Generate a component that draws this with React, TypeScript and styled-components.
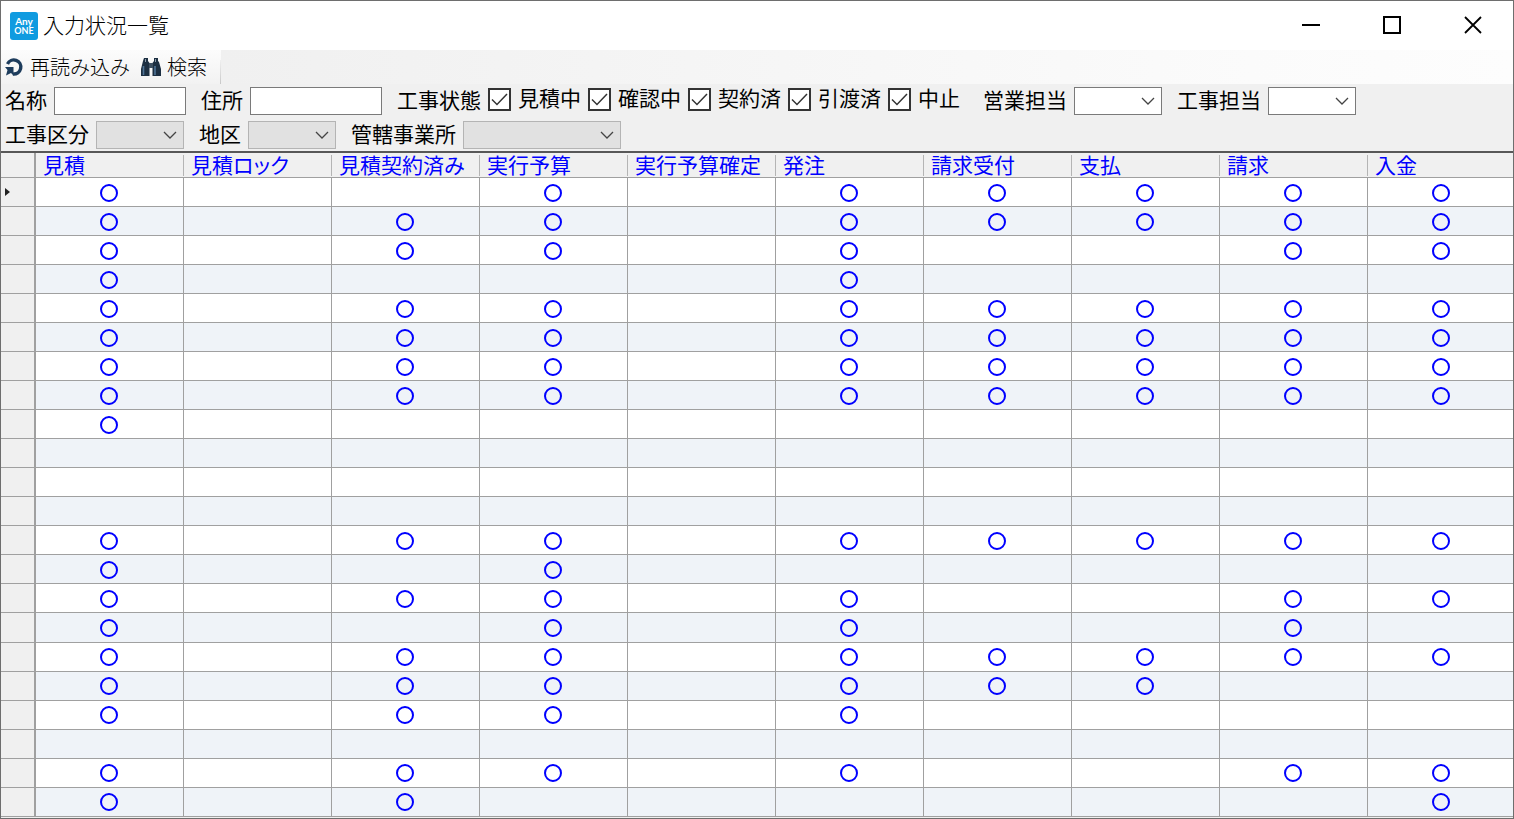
import React from "react";
import styled, { createGlobalStyle } from "styled-components";

const GlobalStyle = createGlobalStyle`
  *, *::before, *::after { box-sizing: border-box; }
  body {
    margin: 0;
    overflow: hidden;
    font-family: "Noto Sans CJK JP", "Noto Sans", sans-serif;
    color: #000;
  }
  button, input, select { font: inherit; color: inherit; }
`;

const Window = styled.main`
  display: flex;
  flex-direction: column;
  height: 100vh;
  border: 1px solid #6e6e6e;
  background: #f0f0f0;
  overflow: hidden;
`;

const TitleBar = styled.header`
  display: flex;
  align-items: center;
  flex: none;
  height: 49px;
  padding-left: 9px;
  background: #fff;
`;

const Title = styled.h1`
  flex: 1;
  margin: 0;
  padding: 0 0 3px 5px;
  font-size: 21px;
  line-height: 28px;
  font-weight: 300;
`;

const WindowButton = styled.button`
  display: flex;
  align-items: center;
  justify-content: center;
  width: 81px;
  height: 100%;
  padding: 0 0 2px;
  border: 0;
  background: transparent;
`;

const ToolBar = styled.div`
  display: flex;
  flex: none;
  height: 34px;
  background: linear-gradient(to right, #f0f0f0 220px, #fbfbfb 1250px, #fdfdfd);
`;

const ToolGroup = styled.div`
  display: flex;
  align-items: center;
  gap: 10px;
  width: 220px;
  padding-left: 4px;
  background:
    linear-gradient(#f0f0f0, #c8c8c8) right bottom / 1px 24px no-repeat,
    linear-gradient(#fcfcfc, #f2f2f2);
`;

const ToolButton = styled.button`
  display: flex;
  align-items: center;
  gap: 5px;
  padding: 0;
  border: 0;
  background: transparent;
  font-size: 20px;
  line-height: 28px;
  font-weight: 300;
  white-space: nowrap;
`;

const Filters = styled.form`
  display: flex;
  flex-direction: column;
  flex: none;
  gap: 6px;
  padding: 3px 0 2px 4px;
`;

const FilterRow = styled.div`
  display: flex;
  align-items: center;
  gap: 15px;
  height: 28px;
`;

const Field = styled.label`
  display: flex;
  align-items: center;
  gap: 7px;
`;

const Caption = styled.span`
  padding-bottom: 3px;
  font-size: 21px;
  line-height: 25px;
  white-space: nowrap;
`;

const TextBox = styled.input`
  width: 132px;
  height: 28px;
  padding: 0 4px;
  border: 1px solid #7a7a7a;
  background: #fff;
  outline: none;
`;

const SelectWrap = styled.span<{ $width: number }>`
  position: relative;
  display: flex;
  width: ${(p) => p.$width}px;

  svg {
    position: absolute;
    right: 7px;
    top: 10px;
    pointer-events: none;
  }
`;

const SelectBox = styled.select`
  appearance: none;
  width: 100%;
  height: 28px;
  padding: 0 24px 0 4px;
  border: 1px solid #7a7a7a;
  border-radius: 0;
  background: #fff;
  opacity: 1;

  &:disabled {
    border-color: #b4b4b4;
    background: #e1e1e1;
  }
`;

const States = styled.fieldset`
  display: flex;
  align-items: center;
  gap: 7px;
  margin: 0 8px 0 0;
  padding: 0;
  border: 0;
`;

const StateLabel = styled.label`
  display: flex;
  align-items: center;
  gap: 7px;
  height: 28px;
  padding-bottom: 4px;
`;

const CheckBox = styled.input`
  appearance: none;
  width: 23px;
  height: 23px;
  margin: 0;
  border: 2px solid #333;
  background: #fff;

  &:checked {
    background-image: url("data:image/svg+xml,%3Csvg xmlns='http://www.w3.org/2000/svg' viewBox='0 0 19 19'%3E%3Cpath d='M2 9.5l5 5L17 4' fill='none' stroke='%23333' stroke-width='1.5'/%3E%3C/svg%3E");
  }
`;

const GridPane = styled.section`
  flex: 1;
  min-height: 0;
  padding-bottom: 1px;
  border-top: 2px solid #585858;
`;

const Grid = styled.table`
  width: 100%;
  height: 100%;
  border-collapse: separate;
  border-spacing: 0;
  table-layout: fixed;
`;

const CornerCell = styled.th`
  width: 35px;
  padding: 0;
  border-right: 2px solid #a0a0a0;
  border-bottom: 1px solid #a0a0a0;
`;

const HeadCell = styled.th`
  width: 148px;
  height: 25px;
  padding: 0 0 2px 7px;
  border-bottom: 1px solid #a0a0a0;
  background: linear-gradient(#b4b4b4, #b4b4b4) right 0 bottom 1px / 1px 21px no-repeat;
  color: #00f;
  font-size: 21px;
  line-height: 22px;
  font-weight: 400;
  font-feature-settings: "palt";
  text-align: left;
  white-space: nowrap;

  &:last-child { background: none; }
`;

const RowHead = styled.th`
  padding: 0 0 0 4px;
  border-right: 2px solid #a0a0a0;
  border-bottom: 1px solid #a0a0a0;
  background: #f0f0f0;
  text-align: left;

  svg { display: block; }
`;

const Row = styled.tr`
  background: #fff;
  &:nth-child(even) { background: #eff3f8; }
`;

const Cell = styled.td`
  height: 29px;
  padding: 1px 2px 0 0;
  border-right: 1px solid #a0a0a0;
  border-bottom: 1px solid #a0a0a0;
  &:last-child { border-right: 0; }

  svg { display: block; margin: 0 auto; }
`;

const Arrow = () => (
  <svg width="14" height="9" viewBox="0 0 14 9" fill="none" stroke="#444" strokeWidth="1.3">
    <path d="M1 1l6 6 6-6" />
  </svg>
);

const Circle = () => (
  <svg width="18" height="18" viewBox="0 0 18 18" role="img" aria-label="済">
    <circle cx="9" cy="9" r="8" fill="none" stroke="#00f" strokeWidth="2" />
  </svg>
);

const AppIcon = () => (
  <svg width="28" height="28" viewBox="0 0 28 28" aria-hidden="true">
    <rect width="28" height="28" rx="3" fill="#109be0" />
    <g fill="#fff" fontFamily="Lato, sans-serif" fontWeight="700" textAnchor="middle">
      <text x="14" y="13" fontSize="10">Any</text>
      <text x="14" y="22" fontSize="9">ONE</text>
    </g>
  </svg>
);

const ReloadIcon = () => (
  <svg width="20" height="20" viewBox="0 0 20 20" aria-hidden="true">
    <path d="M2.500 7A7 7 0 1 1 8 17" fill="none" stroke="#1d3c5c" strokeWidth="3.400" />
    <path d="M0 10h8.500v8.500l-2.500-2.500-5 2.500 1.500-5.500z" fill="#1d3c5c" />
  </svg>
);

const BinocularsIcon = () => (
  <svg width="22" height="20" viewBox="0 0 22 20" aria-hidden="true">
    <path d="M4 1h4v3l1.500 2v13H1v-7l2-8zM14 1h4v3l1 1 2 7v7h-8.500V6L14 4z" fill="#1c2f42" />
    <path d="M9 6h4v5H9z" fill="#3c4f61" />
    <path d="M3.500 9v9M15 9v9" stroke="#4f7396" strokeWidth="1.6" />
    <path d="M5.500 2v3M15.500 2v3" stroke="#8a9bab" />
  </svg>
);

const columns = ["見積", "見積ロック", "見積契約済み", "実行予算", "実行予算確定", "発注", "請求受付", "支払", "請求", "入金"];

/* One string per record, one flag per column. */
const records = [
  "1001011111",
  "1011011111",
  "1011010011",
  "1000010000",
  "1011011111",
  "1011011111",
  "1011011111",
  "1011011111",
  "1000000000",
  "0000000000",
  "0000000000",
  "0000000000",
  "1011011111",
  "1001000000",
  "1011010011",
  "1001010010",
  "1011011111",
  "1011011100",
  "1011010000",
  "0000000000",
  "1011010011",
  "1010000001",
];

const states = ["見積中", "確認中", "契約済", "引渡済", "中止"];

function SelectField({ label, width, disabled }: { label: string; width: number; disabled?: boolean }) {
  return (
    <Field>
      <Caption>{label}</Caption>
      <SelectWrap $width={width}>
        <SelectBox disabled={disabled} defaultValue="">
          <option value="" />
        </SelectBox>
        <Arrow />
      </SelectWrap>
    </Field>
  );
}

export default function App() {
  return (
    <>
      <GlobalStyle />
      <Window>
        <TitleBar>
          <AppIcon />
          <Title>入力状況一覧</Title>
          <WindowButton aria-label="最小化">
            <svg width="18" height="18" viewBox="0 0 18 18"><path d="M0 9h18" stroke="#000" strokeWidth="2" /></svg>
          </WindowButton>
          <WindowButton aria-label="最大化">
            <svg width="18" height="18" viewBox="0 0 18 18"><path d="M1 1h16v16H1z" fill="none" stroke="#000" strokeWidth="2" /></svg>
          </WindowButton>
          <WindowButton aria-label="閉じる">
            <svg width="18" height="18" viewBox="0 0 18 18"><path d="M1 1l16 16M17 1L1 17" stroke="#000" strokeWidth="1.8" /></svg>
          </WindowButton>
        </TitleBar>

        <ToolBar>
          <ToolGroup>
            <ToolButton type="button"><ReloadIcon />再読み込み</ToolButton>
            <ToolButton type="button"><BinocularsIcon />検索</ToolButton>
          </ToolGroup>
        </ToolBar>

        <Filters>
          <FilterRow>
            <Field><Caption>名称</Caption><TextBox type="text" /></Field>
            <Field><Caption>住所</Caption><TextBox type="text" /></Field>
            <States aria-label="工事状態">
              <Caption>工事状態</Caption>
              {states.map((s) => (
                <StateLabel key={s}>
                  <CheckBox type="checkbox" defaultChecked />
                  <Caption>{s}</Caption>
                </StateLabel>
              ))}
            </States>
            <SelectField label="営業担当" width={88} />
            <SelectField label="工事担当" width={88} />
          </FilterRow>
          <FilterRow>
            <SelectField label="工事区分" width={88} disabled />
            <SelectField label="地区" width={88} disabled />
            <SelectField label="管轄事業所" width={158} disabled />
          </FilterRow>
        </Filters>

        <GridPane>
          <Grid>
            <thead>
              <tr>
                <CornerCell />
                {columns.map((c) => <HeadCell key={c} scope="col">{c}</HeadCell>)}
              </tr>
            </thead>
            <tbody>
              {records.map((record, i) => (
                <Row key={i}>
                  <RowHead scope="row">
                    {i === 0 && (
                      <svg width="5" height="8" viewBox="0 0 5 8"><path d="M0 0l5 4-5 4z" fill="#222" /></svg>
                    )}
                  </RowHead>
                  {record.split("").map((flag, j) => <Cell key={j}>{flag === "1" && <Circle />}</Cell>)}
                </Row>
              ))}
            </tbody>
          </Grid>
        </GridPane>
      </Window>
    </>
  );
}
